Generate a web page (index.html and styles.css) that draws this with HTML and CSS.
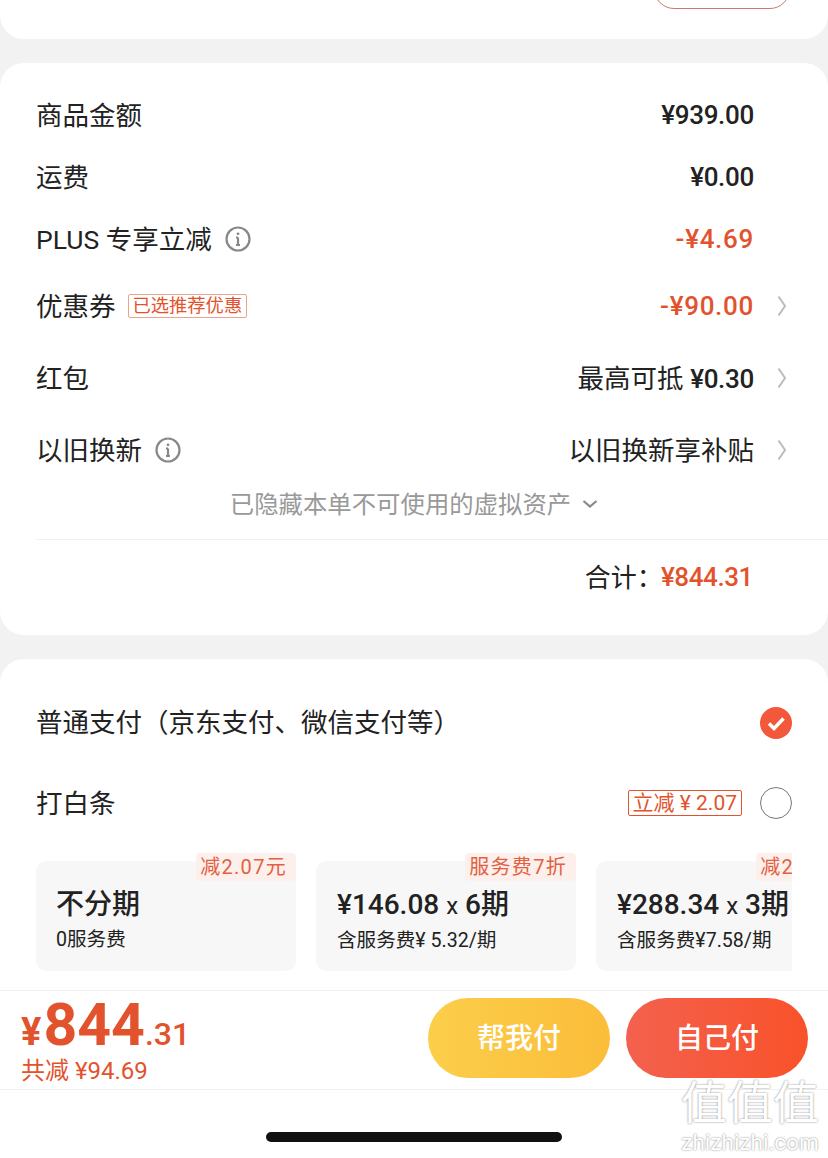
FILE: index.html
```html
<!DOCTYPE html>
<html lang="zh-CN">
    <head>
        <meta charset="utf-8">
        <title>订单结算</title>
        <link rel="stylesheet" href="styles.css">
    </head>
    <body>
        <div class="page">
            <div class="card top-card">
                <div class="top-btn"></div>
            </div>

            <div class="card price-card">
                <div class="row row-62">
                    <span class="label">商品金额</span>
                    <span class="num amt">¥939.00</span>
                </div>
                <div class="row row-62">
                    <span class="label">运费</span>
                    <span class="num amt">¥0.00</span>
                </div>
                <div class="row row-62">
                    <span class="label">PLUS 专享立减</span>
                    <svg class="info" viewBox="0 0 26 26"><circle cx="13" cy="13" r="11.5"/><path d="M13 11.5v7.5M11 11.5h2M11 19h4"/><circle class="dot" cx="13" cy="7.8" r="1.4"/></svg>
                    <span class="num amt minus">-¥4.69</span>
                </div>
                <div class="row row-72">
                    <span class="label">优惠券</span>
                    <span class="coupon-tag">已选推荐优惠</span>
                    <span class="num amt minus">-¥90.00</span>
                    <svg class="arrow" viewBox="0 0 10 22"><path d="M1.5 1.5 8 11 1.5 20.5"/></svg>
                </div>
                <div class="row row-72">
                    <span class="label">红包</span>
                    <span class="num text">最高可抵 <b class="amt">¥0.30</b></span>
                    <svg class="arrow" viewBox="0 0 10 22"><path d="M1.5 1.5 8 11 1.5 20.5"/></svg>
                </div>
                <div class="row row-72">
                    <span class="label">以旧换新</span>
                    <svg class="info" viewBox="0 0 26 26"><circle cx="13" cy="13" r="11.5"/><path d="M13 11.5v7.5M11 11.5h2M11 19h4"/><circle class="dot" cx="13" cy="7.8" r="1.4"/></svg>
                    <span class="num text">以旧换新享补贴</span>
                    <svg class="arrow" viewBox="0 0 10 22"><path d="M1.5 1.5 8 11 1.5 20.5"/></svg>
                </div>
                <div class="hidden-note">
                    <span class="note-text">已隐藏本单不可使用的虚拟资产</span>
                    <svg class="down" viewBox="0 0 16 10"><path d="M1.5 2 8 7.5 14.5 2"/></svg>
                </div>
                <div class="total">
                    <span class="total-label">合计：</span><span class="total-amt">¥844.31</span>
                </div>
            </div>

            <div class="card pay-card">
                <div class="pay-row first">
                    <span class="label">普通支付（京东支付、微信支付等）</span>
                    <svg class="check" viewBox="0 0 32 32"><circle cx="16" cy="16" r="16"/><path d="M9 16.5l5 5 9.5-10"/></svg>
                </div>
                <div class="pay-row second">
                    <span class="label">打白条</span>
                    <span class="cut-tag">立减 ¥ 2.07</span>
                    <span class="radio"></span>
                </div>
                <div class="plans">
                    <div class="plan">
                        <span class="plan-tag">减2.07元</span>
                        <div class="plan-title">不分期</div>
                        <div class="plan-sub">0服务费</div>
                    </div>
                    <div class="plan">
                        <span class="plan-tag">服务费7折</span>
                        <div class="plan-title">¥146.08 <i>x</i> 6期</div>
                        <div class="plan-sub">含服务费¥ 5.32/期</div>
                    </div>
                    <div class="plan">
                        <span class="plan-tag">减2.07元</span>
                        <div class="plan-title">¥288.34 <i>x</i> 3期</div>
                        <div class="plan-sub">含服务费¥7.58/期</div>
                    </div>
                </div>
            </div>

            <div class="bar">
                <div class="sum">
                    <div class="sum-price"><span class="yen">¥</span><span class="big">844</span><span class="cents">.31</span></div>
                    <div class="sum-cut">共减 ¥94.69</div>
                </div>
                <button type="button" class="pay-btn friend">帮我付</button>
                <button type="button" class="pay-btn self">自己付</button>
            </div>

            <div class="home">
                <div class="home-line"></div>
            </div>

            <div class="mark">
                <div class="mark-big">值值值</div>
                <div class="mark-small">zhizhizhi.com</div>
            </div>
        </div>
    </body>
</html>
```

FILE: styles.css
```css
*{
    box-sizing: border-box;
}
body{
    margin: 0;
    background-color: #f2f2f2;
    font-family: Roboto, "Noto Sans CJK SC", sans-serif;
    color: #222;
}
.page{
    position: relative;
    width: 828px;
    height: 1158px;
    overflow: hidden;
}
.card{
    background-color: white;
    border-radius: 24px;
}
.top-card{
    height: 39px;
    border-radius: 0 0 24px 24px;
    display: flex;
    justify-content: flex-end;
    align-items: flex-start;
    padding-right: 38px;
    overflow: hidden;
}
.top-btn{
    width: 136px;
    height: 40px;
    margin-top: -31px;
    border: 1px solid #c97b68;
    border-radius: 20px;
}
.price-card{
    margin-top: 24px;
    height: 572px;
    padding: 21px 0 0 36px;
}
.row{
    display: flex;
    align-items: center;
    padding-right: 74px;
    position: relative;
}
.row-62{
    height: 62px;
}
.row-72{
    height: 72px;
}
.label{
    font-size: 26.5px;
    margin-right: 13px;
    padding-bottom: 4px;
    white-space: nowrap;
}
.num{
    margin-left: auto;
    font-size: 26px;
    white-space: nowrap;
}
.num.text{
    font-size: 26.5px;
    padding-bottom: 4px;
}
.amt{
    font-weight: 500;
    font-size: 26px;
    letter-spacing: -0.3px;
}
.minus{
    color: #e2532d;
    letter-spacing: 0.7px;
}
.info{
    width: 26px;
    height: 26px;
    fill: none;
    stroke: #888;
    stroke-width: 2.2;
}
.info .dot{
    fill: #888;
    stroke: none;
}
.coupon-tag{
    border: 1px solid #e8a48f;
    border-radius: 2px;
    color: #e2532d;
    font-size: 18.3px;
    line-height: 22px;
    margin-left: -1px;
    padding: 0 4px;
    white-space: nowrap;
}
.arrow{
    position: absolute;
    right: 41px;
    top: 50%;
    margin-top: -11px;
    width: 10px;
    height: 22px;
    fill: none;
    stroke: #bbb;
    stroke-width: 2;
}
.hidden-note{
    height: 36px;
    display: flex;
    align-items: center;
    justify-content: center;
    gap: 11px;
    font-size: 24.4px;
    color: #999;
    padding-right: 36px;
}
.note-text{
    padding-bottom: 4px;
}
.down{
    width: 16px;
    height: 10px;
    fill: none;
    stroke: #888;
    stroke-width: 2.2;
}
.total{
    margin-top: 17px;
    border-top: 1px solid #f0f0f0;
    height: 76px;
    display: flex;
    align-items: center;
    justify-content: flex-end;
    padding-right: 75px;
    font-size: 26px;
    white-space: nowrap;
}
.total-label{
    padding-bottom: 4px;
}
.total-amt{
    color: #e2532d;
    font-weight: 500;
    letter-spacing: -0.4px;
    margin-left: -2px;
    padding-bottom: 2px;
}
.pay-card{
    margin-top: 24px;
    height: 340px;
    padding: 0 36px;
    border-radius: 24px 24px 0 0;
    overflow: hidden;
}
.pay-row{
    display: flex;
    align-items: center;
}
.pay-row.first{
    height: 128px;
}
.pay-row.first .label{
    padding-bottom: 6px;
}
.pay-row.second{
    height: 32px;
}
.check{
    margin-left: auto;
    width: 32px;
    height: 32px;
}
.check circle{
    fill: #f4583a;
}
.check path{
    fill: none;
    stroke: white;
    stroke-width: 3.5;
}
.cut-tag{
    margin-left: auto;
    margin-right: 18px;
    border: 1px solid #e2532d;
    border-radius: 2px;
    color: #e2532d;
    font-size: 21px;
    line-height: 24px;
    padding: 0 4px;
    white-space: nowrap;
}
.radio{
    width: 32px;
    height: 32px;
    border: 1px solid #777;
    border-radius: 50%;
}
.plans{
    margin-top: 34px;
    display: flex;
    gap: 20px;
    overflow: hidden;
    padding-top: 8px;
}
.plan{
    position: relative;
    flex: none;
    width: 260px;
    height: 110px;
    background-color: #f7f7f7;
    border-radius: 10px;
    padding: 25px 0 0 20px;
}
.plan + .plan{
    padding-left: 21px;
}
.plan-tag{
    position: absolute;
    top: -8px;
    right: 0;
    background-color: #fdf0ec;
    border-radius: 4px;
    color: #e2603f;
    font-size: 20px;
    letter-spacing: 1.3px;
    line-height: 28px;
    padding: 0 9px 0 4px;
    white-space: nowrap;
}
.plan-title{
    font-size: 28px;
    font-weight: 500;
    line-height: 38px;
    white-space: nowrap;
}
.plan-title i{
    font-style: normal;
    font-weight: 400;
    font-size: 24px;
}
.plan-sub{
    margin-top: 3px;
    font-size: 19.6px;
    line-height: 26px;
    white-space: nowrap;
}
.bar{
    position: absolute;
    left: 0;
    top: 990px;
    width: 828px;
    height: 100px;
    background-color: white;
    border-top: 1px solid #f2f2f2;
    border-bottom: 1px solid #f2f2f2;
    display: flex;
    align-items: center;
    gap: 16px;
    padding: 0 20px 5px 21px;
}
.sum{
    margin-right: auto;
    padding-top: 2px;
    color: #e2532d;
}
.sum-price{
    display: flex;
    align-items: baseline;
    line-height: 64px;
    font-weight: 500;
    height: 64px;
}
.yen{
    font-size: 38px;
    font-weight: 700;
    margin-right: 2px;
}
.big{
    font-size: 59px;
    font-weight: 700;
}
.cents{
    font-size: 32px;
}
.sum-cut{
    font-size: 24px;
    line-height: 28px;
}
.pay-btn{
    width: 182px;
    height: 80px;
    border: none;
    border-radius: 40px;
    color: white;
    font-size: 28px;
    font-family: "Noto Sans CJK SC", sans-serif;
    font-weight: 500;
    padding: 0 0 4px;
}
.friend{
    background: linear-gradient(90deg, #fbce4a, #fbbd3a);
}
.self{
    background: linear-gradient(90deg, #f3614e, #f9522a);
}
.home{
    position: absolute;
    left: 0;
    top: 1090px;
    width: 828px;
    height: 68px;
    background-color: white;
    display: flex;
    justify-content: center;
    padding-top: 42px;
}
.home-line{
    width: 296px;
    height: 10px;
    border-radius: 5px;
    background-color: #111;
}
.mark{
    position: absolute;
    left: 672px;
    top: 1076px;
    width: 156px;
    text-align: center;
    color: white;
    text-shadow: 0 0 2px #777;
}
.mark-big{
    font-size: 46px;
    line-height: 54px;
}
.mark-small{
    font-size: 22.5px;
    line-height: 24px;
}
```
